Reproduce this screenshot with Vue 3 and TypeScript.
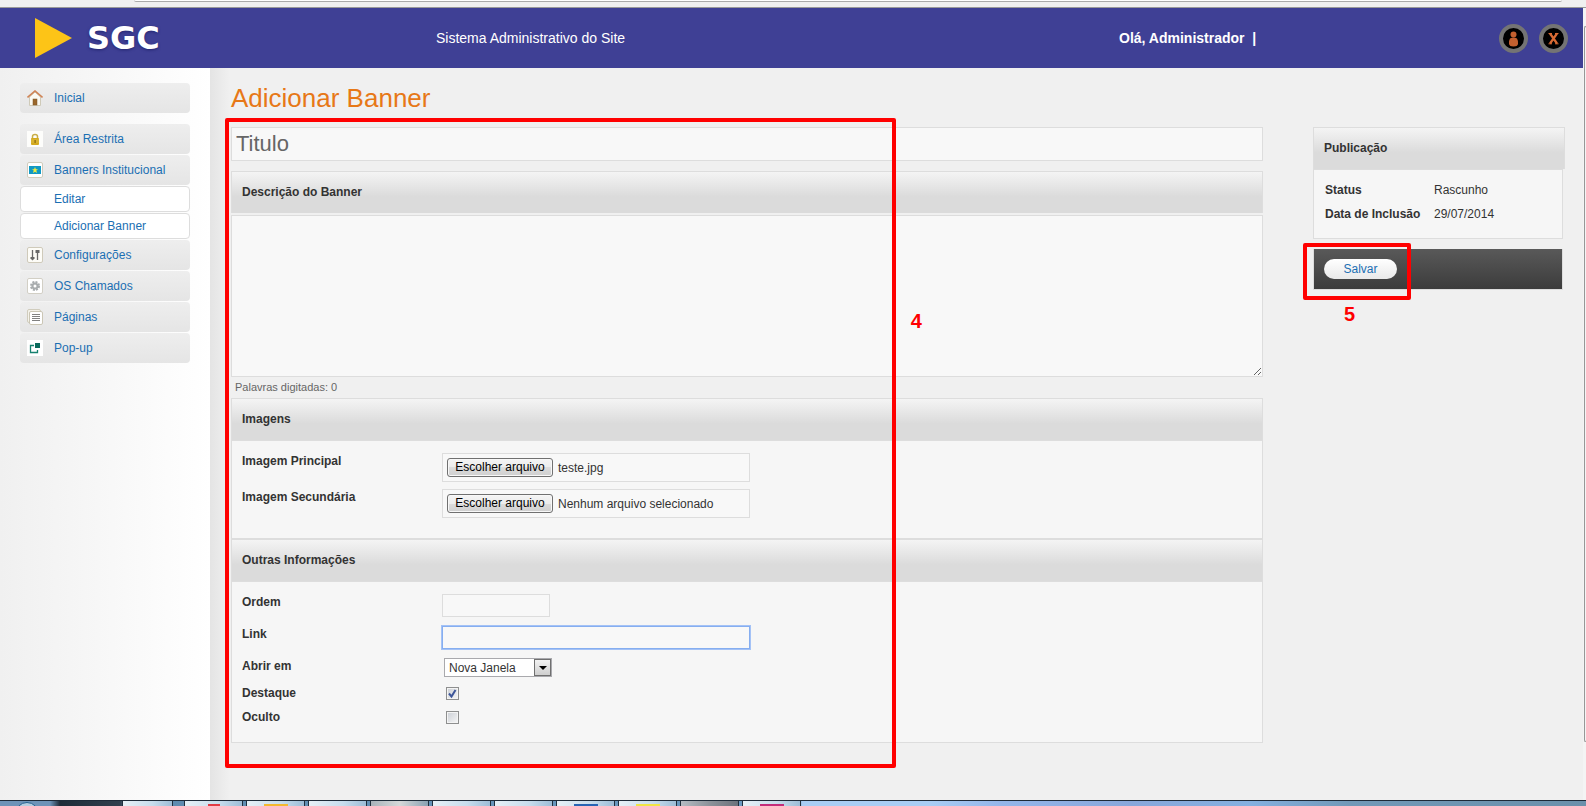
<script setup lang="ts">
import { ref, computed } from 'vue'

interface MenuItem {
  label: string
  icon: string
  children?: string[]
}

const home: MenuItem = { label: 'Inicial', icon: 'home' }
const menu: MenuItem[] = [
  { label: 'Área Restrita', icon: 'lock' },
  { label: 'Banners Institucional', icon: 'banner', children: ['Editar', 'Adicionar Banner'] },
  { label: 'Configurações', icon: 'config' },
  { label: 'OS Chamados', icon: 'gear' },
  { label: 'Páginas', icon: 'pages' },
  { label: 'Pop-up', icon: 'popup' },
]
const groups: MenuItem[][] = [[home], menu]

const titulo = ref('')
const descricao = ref('')
const ordem = ref('')
const link = ref('')
const destino = ref('Nova Janela')
const destaque = ref(true)
const oculto = ref(false)
const palavras = computed(() => descricao.value.split(/\s+/).filter(Boolean).length)

const arquivos = ref([
  { id: 'img1', label: 'Imagem Principal', nome: 'teste.jpg' },
  { id: 'img2', label: 'Imagem Secundária', nome: 'Nenhum arquivo selecionado' },
])

function escolher(index: number, event: Event) {
  const file = (event.target as HTMLInputElement).files?.[0]
  arquivos.value[index].nome = file ? file.name : 'Nenhum arquivo selecionado'
}

const tasks = ['opera', 'folder', 'plain', 'grey', 'plain', 'plain', 'blue', 'yellow', 'dark', 'pink']
</script>

<template>
  <div class="screen">
    <div class="browser-edge"><div class="url-edge"></div></div>
    <div class="viewport">
      <div class="page">
        <header class="top">
          <a class="logo" href="#">
            <svg width="38" height="40" viewBox="0 0 38 40" aria-hidden="true"><path d="M0 0L37 20L0 40Z" fill="#fdc417" /></svg>
            <span>SGC</span>
          </a>
          <div class="system">Sistema Administrativo do Site</div>
          <div class="hello">Olá, Administrador&nbsp; |</div>
          <nav class="actions">
            <a href="#" aria-label="Perfil">
              <svg width="29" height="29" viewBox="0 0 29 29">
                <circle cx="14.500" cy="14.500" r="12.500" fill="#000" stroke="#747474" stroke-width="4" />
                <circle cx="14.500" cy="10.500" r="3" fill="#c4602f" />
                <path d="M11 14.500Q14.500 12.500 18 14.500Q19.500 17 19 20Q18.500 22.500 14.500 22.500Q10.500 22.500 10 20Q9.500 17 11 14.500Z" fill="#c4602f" />
              </svg>
            </a>
            <a href="#" aria-label="Sair">
              <svg width="29" height="29" viewBox="0 0 29 29">
                <circle cx="14.500" cy="14.500" r="12.500" fill="#000" stroke="#747474" stroke-width="4" />
                <path d="M11 9.500L18 19.500M18 9.500L11 19.500" stroke="#d96a33" stroke-width="2.200" />
                <path d="M9.500 9.500h3.500M16 9.500h3.500M9.500 19.800h3.500M16 19.800h3.500" stroke="#d96a33" />
              </svg>
            </a>
          </nav>
        </header>

        <div class="columns">
          <nav class="sidebar">
            <ul v-for="(group, g) in groups" :key="g">
              <li v-for="item in group" :key="item.label">
                <a class="item" href="#">
                  <svg width="16" height="16" viewBox="0 0 16 16" aria-hidden="true">
                    <g v-if="item.icon === 'home'">
                      <path d="M2.500 7V15.500H13.500V7L8 2Z" fill="#fbfaf3" stroke="#cfcab8" />
                      <rect x="6" y="9" width="4" height="6" fill="#9a672c" stroke="#7d5527" stroke-width=".5" />
                      <path d="M.5 7.500L8 1L15.500 7.500" fill="none" stroke="#cf8354" stroke-width="1.600" />
                    </g>
                    <g v-else-if="item.icon === 'lock'">
                      <rect width="16" height="16" fill="#fdfdfb" />
                      <path d="M5.500 8V5.500Q5.500 3.500 8 3.500T10.500 5.500V8" fill="none" stroke="#c9ae48" stroke-width="1.500" />
                      <rect x="4" y="7" width="8" height="7" rx="1" fill="#d3a91d" />
                      <path d="M4 9h8M4 11h8" stroke="#e5c95a" stroke-width=".6" />
                      <rect x="7.500" y="9" width="1.200" height="3" fill="#86660d" />
                    </g>
                    <g v-else-if="item.icon === 'banner'">
                      <rect x=".5" y=".5" width="15" height="15" rx="1.500" fill="#fff" stroke="#d0ccbd" />
                      <rect x="2" y="4" width="12" height="8" fill="#1199c4" />
                      <path d="M8 5L8.900 7.200L11 7.300L9.300 8.600L10 11L8 9.700L6 11L6.700 8.600L5 7.300L7.100 7.200Z" fill="#f5ee3d" />
                    </g>
                    <g v-else-if="item.icon === 'config'">
                      <rect x=".5" y=".5" width="15" height="15" rx="1.500" fill="#fdfcf7" stroke="#cfcaba" />
                      <path d="M5.500 3V12M10.500 4V13" stroke="#686868" stroke-width="1.300" />
                      <path d="M3.500 10H7.500V11.500L5.500 13.500L3.500 11.500Z" fill="#686868" />
                      <path d="M8.500 3H12.500V6H8.500Z" fill="#686868" />
                    </g>
                    <g v-else-if="item.icon === 'gear'">
                      <rect x=".5" y=".5" width="15" height="15" rx="1.500" fill="#fff" stroke="#d2cfc5" />
                      <circle cx="8" cy="8" r="4" fill="none" stroke="#a8acae" stroke-width="2" stroke-dasharray="2 1.142" />
                      <circle cx="8" cy="8" r="2.500" fill="none" stroke="#a8acae" stroke-width="2" />
                    </g>
                    <g v-else-if="item.icon === 'pages'">
                      <rect x=".5" y=".5" width="13" height="13" rx="1.500" fill="#f4f2ea" stroke="#d0ccbd" />
                      <rect x="2.500" y="2.500" width="13" height="13" rx="1.500" fill="#fff" stroke="#cbc6b5" />
                      <path d="M5 5.500h8M5 7.500h8M5 9.500h8M5 11.500h8" stroke="#737373" stroke-width=".9" />
                    </g>
                    <g v-else>
                      <rect width="16" height="16" fill="#fff" />
                      <path d="M7 5.500H3.500V12.500H10.500V10" fill="none" stroke="#16816f" stroke-width="1.300" />
                      <rect x="8" y="3" width="5" height="5" fill="#0b6a5c" />
                    </g>
                  </svg>
                  {{ item.label }}
                </a>
                <a v-for="child in item.children" :key="child" class="sub" href="#">{{ child }}</a>
              </li>
            </ul>
          </nav>

          <main class="content">
            <h1>Adicionar Banner</h1>
            <form class="form" @submit.prevent>
              <input v-model="titulo" class="title-input" type="text" placeholder="Titulo" aria-label="Titulo" />

              <label class="bar" for="descricao">Descrição do Banner</label>
              <textarea id="descricao" v-model="descricao"></textarea>
              <p class="count">Palavras digitadas: {{ palavras }}</p>

              <h2 class="bar">Imagens</h2>
              <div class="panel files">
                <div v-for="(arquivo, i) in arquivos" :key="arquivo.id" class="row">
                  <label class="name" :for="arquivo.id">{{ arquivo.label }}</label>
                  <label class="file">
                    <input :id="arquivo.id" type="file" @change="escolher(i, $event)" />
                    <span class="pick">Escolher arquivo</span>
                    <span>{{ arquivo.nome }}</span>
                  </label>
                </div>
              </div>

              <h2 class="bar">Outras Informações</h2>
              <div class="panel">
                <div class="row">
                  <label class="name" for="ordem">Ordem</label>
                  <input id="ordem" v-model="ordem" class="text short" type="text" />
                </div>
                <div class="row">
                  <label class="name" for="link">Link</label>
                  <input id="link" v-model="link" class="text active" type="text" />
                </div>
                <div class="row">
                  <label class="name" for="destino">Abrir em</label>
                  <div class="select">
                    <select id="destino" v-model="destino">
                      <option>Nova Janela</option>
                      <option>Mesma Janela</option>
                    </select>
                    <span class="arrow"><svg width="8" height="4" viewBox="0 0 8 4"><path d="M0 0H8L4 4Z" /></svg></span>
                  </div>
                </div>
                <div class="row check">
                  <label class="name" for="destaque">Destaque</label>
                  <span class="box">
                    <input id="destaque" v-model="destaque" type="checkbox" />
                    <svg v-if="destaque" width="13" height="13" viewBox="0 0 13 13"><path d="M3 6.500L5.500 9.500L9.500 3" fill="none" stroke="#3d5699" stroke-width="2" /></svg>
                  </span>
                </div>
                <div class="row check">
                  <label class="name" for="oculto">Oculto</label>
                  <span class="box">
                    <input id="oculto" v-model="oculto" type="checkbox" />
                    <svg v-if="oculto" width="13" height="13" viewBox="0 0 13 13"><path d="M3 6.500L5.500 9.500L9.500 3" fill="none" stroke="#3d5699" stroke-width="2" /></svg>
                  </span>
                </div>
              </div>
              <div class="mark mark-form"><span>4</span></div>
            </form>
          </main>

          <aside class="publish">
            <h2 class="bar">Publicação</h2>
            <dl class="panel info">
              <dt>Status</dt>
              <dd>Rascunho</dd>
              <dt>Data de Inclusão</dt>
              <dd>29/07/2014</dd>
            </dl>
            <div class="save-bar">
              <button type="button">Salvar</button>
              <div class="mark mark-save"><span>5</span></div>
            </div>
          </aside>
        </div>
      </div>
      <div class="scroll"><div class="thumb"></div></div>
    </div>
    <div class="taskbar">
      <div class="orb"></div>
      <div class="task wide"></div>
      <div v-for="(task, i) in tasks" :key="i" class="task" :class="task"><i></i></div>
    </div>
  </div>
</template>

<style>
html,
body {
  background: #f0f0f0;
}
</style>

<style scoped>
.screen {
  display: flex;
  flex-direction: column;
  height: 100vh;
  overflow: hidden;
  font: 12px/16px 'Liberation Sans', Arial, sans-serif;
  color: #333;
  background: #f0f0f0;
}
.screen *,
.screen *::before {
  box-sizing: border-box;
}
a {
  color: #1b6fb3;
  text-decoration: none;
}
h1,
h2,
p,
ul,
dl,
dd {
  margin: 0;
  padding: 0;
}
.browser-edge {
  flex: none;
  height: 8px;
  border-bottom: 1px solid #999;
  padding: 0 24px 0 134px;
}
.url-edge {
  height: 2px;
  border-bottom: 1px solid #aaa;
  border-radius: 0 0 3px 3px;
  background: #fff;
}
.viewport {
  flex: 1;
  display: flex;
  min-height: 0;
}
.page {
  flex: 1;
  display: flex;
  flex-direction: column;
  min-width: 0;
}
.scroll {
  width: 3px;
  padding: 18px 0 58px 1px;
  background: #f4f4f4;
}
.thumb {
  height: 100%;
  border: 1px solid #979797;
  border-right: 0;
  border-radius: 2px 0 0 2px;
}
.top {
  flex: none;
  display: grid;
  grid-template-columns: 436fr 683fr 380fr auto;
  align-items: center;
  height: 60px;
  padding-right: 15px;
  background: #3f4095;
  color: #fff;
}
.logo {
  display: flex;
  align-items: center;
  gap: 14px;
  padding-left: 35px;
  color: #fff;
  font: bold 32px/40px 'DejaVu Sans', Verdana, sans-serif;
  text-shadow: 0 1px 3px #22246e;
}
.system {
  font-size: 14px;
}
.hello {
  font-size: 14px;
  font-weight: bold;
}
.actions {
  display: flex;
  gap: 11px;
}
.actions svg {
  display: block;
}
.columns {
  flex: 1;
  display: flex;
  padding-right: 18px;
  background: linear-gradient(to right, #e4e4e4, #f0f0f0 20px) 210px 0 no-repeat;
}
.sidebar {
  flex: none;
  width: 210px;
  padding: 15px 20px;
  background: linear-gradient(to right, #f0f0f0, #fff);
}
.sidebar ul {
  list-style: none;
  margin-bottom: 11px;
}
.item {
  display: flex;
  align-items: center;
  gap: 11px;
  height: 30px;
  padding-left: 7px;
  margin-bottom: 1px;
  border-radius: 4px;
  background: linear-gradient(#eee, #e5e5e5);
}
.sub {
  display: block;
  height: 26px;
  margin-bottom: 1px;
  padding-left: 33px;
  line-height: 24px;
  border: 1px solid #ddd;
  border-radius: 4px;
  background: #fff;
}
.content {
  flex: 1;
  min-width: 0;
  margin: 15px 50px 0 21px;
}
h1 {
  margin-bottom: 14px;
  font-size: 26px;
  font-weight: normal;
  line-height: 30px;
  color: #e77817;
}
.form {
  position: relative;
}
input,
textarea,
select,
button {
  font: inherit;
  color: inherit;
  margin: 0;
}
.title-input {
  display: block;
  width: 100%;
  height: 34px;
  margin-bottom: 10px;
  padding: 0 4px;
  border: 1px solid #ddd;
  background: #f8f8f8;
  font-size: 22px;
}
.title-input::placeholder {
  color: #666;
  opacity: 1;
}
.bar {
  display: block;
  height: 42px;
  padding: 0 10px;
  border: 1px solid #ddd;
  border-bottom: 0;
  background: linear-gradient(#f4f4f4, #dbdbdb 60%);
  font-size: 12px;
  font-weight: bold;
  line-height: 40px;
}
textarea {
  display: block;
  width: 100%;
  height: 162px;
  margin-top: 2px;
  border: 1px solid #ddd;
  background: #f8f8f8;
  resize: vertical;
}
.count {
  padding-left: 4px;
  font-size: 11px;
  line-height: 21px;
  color: #666;
}
.panel {
  display: flex;
  flex-direction: column;
  gap: 9px;
  padding: 12px 10px 17px;
  border: 1px solid #ddd;
  background: #f6f6f6;
}
.files {
  gap: 7px;
  padding-bottom: 20px;
}
.row {
  display: flex;
  align-items: flex-start;
}
.name {
  width: 200px;
  line-height: 17px;
  font-weight: bold;
}
.file {
  position: relative;
  display: flex;
  align-items: center;
  gap: 5px;
  width: 308px;
  height: 29px;
  padding-left: 4px;
  border: 1px solid #ddd;
  background: #f8f8f8;
}
.file input {
  position: absolute;
  inset: 0;
  opacity: 0;
}
.pick {
  min-width: 106px;
  height: 19px;
  border: 1px solid #707070;
  border-radius: 3px;
  background: linear-gradient(#f4f4f4, #ececec 50%, #dcdcdc 50%, #cfcfcf);
  box-shadow: inset 0 0 0 1px #f8f8f8;
  color: #000;
  line-height: 17px;
  text-align: center;
}
.text {
  width: 308px;
  height: 23px;
  padding: 0 4px;
  border: 1px solid #ddd;
  background: #f8f8f8;
}
.short {
  width: 108px;
}
.active {
  border-color: #86aef0;
  outline: 1px solid #a4c2f6;
}
.select {
  position: relative;
  width: 108px;
  margin-left: 2px;
}
.select select {
  display: block;
  width: 100%;
  height: 19px;
  padding: 0 20px 0 4px;
  border: 1px solid #a9a9ad;
  border-radius: 0;
  background: #fff;
  appearance: none;
}
.arrow {
  position: absolute;
  inset: 1px 1px 1px auto;
  display: grid;
  place-items: center;
  width: 17px;
  border: 1px solid #707070;
  background: linear-gradient(#f2f2f2, #cfcfcf);
  pointer-events: none;
}
.check {
  align-items: center;
}
.check .name {
  line-height: 15px;
}
.box {
  position: relative;
  margin-left: 4px;
  height: 13px;
}
.box input {
  display: block;
  width: 13px;
  height: 13px;
  appearance: none;
  border: 1px solid #8e8f8f;
  background: linear-gradient(135deg, #cbcfd5, #f6f6f6);
  box-shadow: inset 0 0 0 1px #f4f4f4;
}
.box svg {
  position: absolute;
  inset: 0;
  pointer-events: none;
}
.publish {
  flex: none;
  width: 252px;
  margin-top: 59px;
}
.info {
  display: grid;
  grid-template-columns: 109px 1fr;
  gap: 0;
  margin-right: 2px;
  padding: 8px 11px 12px;
  line-height: 24px;
}
.info dt {
  font-weight: bold;
}
.save-bar {
  position: relative;
  margin: 10px 2px 0 0;
  padding: 10px;
  height: 41px;
  border: solid #ddd;
  border-width: 0 1px 1px;
  background: linear-gradient(#595959, #3c3c3c);
}
.save-bar button {
  display: block;
  width: 73px;
  height: 20px;
  padding: 0;
  border: 0;
  border-radius: 10px;
  background: linear-gradient(#fff, #e9e9e9);
  color: #1b6fb3;
}
.mark {
  position: absolute;
  border: 4px solid #f00;
  border-radius: 2px;
  pointer-events: none;
}
.mark span {
  position: absolute;
  color: #f00;
  font-size: 20px;
  font-weight: bold;
  line-height: 20px;
}
.mark-form {
  top: -9px;
  bottom: -25px;
  left: -6px;
  width: 65%;
}
.mark-form span {
  left: 100%;
  top: 189px;
  margin-left: 19px;
}
.mark-save {
  top: -6px;
  left: -11px;
  width: 108px;
  height: 57px;
}
.mark-save span {
  top: 57px;
  left: 37px;
}
.taskbar {
  flex: none;
  display: flex;
  gap: 3px;
  height: 6px;
  border-top: 1px solid #1d2a38;
  background: linear-gradient(to right, #6d93b8 50px, #1e2b38 60px, #30404e 120px, #5d8aae 130px, #6c9cc4 800px, #a8cdf4 802px, #a8cdf4 930px, #94b6ea 1000px, #88a7db 1130px, #84b0e0 1250px, #7199b8 1350px, #6a90ab);
  overflow: hidden;
}
.orb {
  width: 24px;
  height: 24px;
  margin: 1px 80px 0 15px;
  flex: none;
  border: 1px solid #23618f;
  border-radius: 50%;
  background: #b6cee0;
}
.task {
  flex: none;
  width: 59px;
  border: solid #20303e;
  border-width: 0 1px;
  background: linear-gradient(to right, #e6f0f6, #c7dded 60%, #9dbdd7);
}
.wide {
  width: 51px;
  margin-right: 8px;
}
.task i {
  display: block;
  width: 24px;
  height: 3px;
  margin: 3px auto 0;
}
.opera i {
  width: 12px;
  background: #e23b44;
}
.folder i {
  background: #f4b92f;
}
.blue i {
  background: #2764b4;
}
.yellow i {
  background: #f0e545;
}
.pink i {
  background: #c42c7a;
}
.grey {
  background: linear-gradient(to right, #a9b3ba, #d5d8d9, #8ba2b3);
}
.dark {
  background: linear-gradient(to right, #b5bcc3, #8c929a, #6c727c);
}
</style>
